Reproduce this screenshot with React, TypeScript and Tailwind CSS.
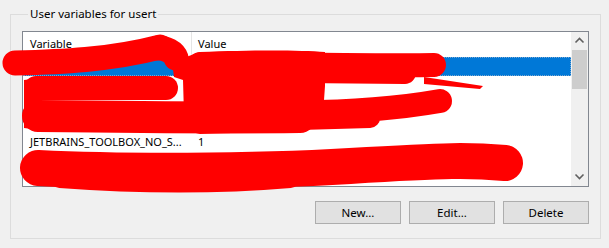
import React from "react";

const font = { fontFamily: '"Noto Sans", "Open Sans", sans-serif' };

function Chevron({ dir }: { dir: "up" | "down" }) {
  return (
    <svg width="17" height="17" viewBox="0 0 17 17">
      {dir === "up" ? (
        <polyline points="4.5,10.5 8.5,6.5 12.5,10.5" fill="none" stroke="#606060" strokeWidth="1.6" />
      ) : (
        <polyline points="4.5,5.5 8.5,9.5 12.5,5.5" fill="none" stroke="#606060" strokeWidth="1.6" />
      )}
    </svg>
  );
}

function Row({ name, value, selected }: { name?: string; value?: string; selected?: boolean }) {
  return (
    <div
      className={
        selected
          ? "flex h-[19px] items-center bg-[#0078d7] border border-dotted border-[#7aa7d0] text-white"
          : "flex h-[19px] items-center text-black"
      }
    >
      <div className="w-[169px] pl-[7px] whitespace-nowrap overflow-hidden">{name}</div>
      <div className="flex-1 pl-[6px] whitespace-nowrap">{value}</div>
    </div>
  );
}

export default function App() {
  return (
    <div className="relative w-[609px] h-[248px] bg-[#f0f0f0] pt-[6px] pl-[10px] overflow-hidden" style={font}>
      <fieldset className="w-[591px] border border-[#dcdcdc] px-[11px] pb-[14px] text-[11px] text-black">
        <legend className="ml-[6px] px-[2px] h-[16px] leading-[16px] text-[11.5px]">User variables for usert</legend>
        <div className="mt-[9px] w-[567px] h-[156px] border border-[#828790] bg-white flex">
          <div className="flex-1 flex flex-col">
            <div className="flex h-[25px] items-center">
              <div className="w-[169px] h-full pl-[7px] flex items-center border-r border-[#e5e5e5]">Variable</div>
              <div className="flex-1 pl-[6px]">Value</div>
            </div>
            <Row selected />
            <Row />
            <Row />
            <Row />
            <Row name="JETBRAINS_TOOLBOX_NO_S..." value="1" />
            <Row />
          </div>
          <div className="w-[17px] bg-[#f0f0f0] flex flex-col">
            <div className="h-[18px] flex items-start justify-center">
              <Chevron dir="up" />
            </div>
            <div className="h-[39px] mx-[1px] bg-[#cdcdcd]" />
            <div className="flex-1" />
            <div className="h-[17px] flex items-start justify-center">
              <Chevron dir="down" />
            </div>
          </div>
        </div>
        <div className="mt-[14px] flex justify-end gap-[8px]">
          <button className="w-[86px] h-[23px] border border-[#adadad] bg-[#e1e1e1] text-[11.5px]">New...</button>
          <button className="w-[86px] h-[23px] border border-[#adadad] bg-[#e1e1e1] text-[11.5px]">Edit...</button>
          <button className="w-[86px] h-[23px] border border-[#adadad] bg-[#e1e1e1] text-[11.5px]">Delete</button>
        </div>
      </fieldset>

      <svg
        className="absolute left-0 top-0 pointer-events-none"
        width="609"
        height="248"
        viewBox="0 0 609 248"
      >
        <g stroke="#ff0000" fill="none" strokeLinecap="round" strokeLinejoin="round">
          <path d="M15 63 C 60 62, 110 60, 160 47" strokeWidth="25" />
          <path d="M158 48 C 166 48, 174 52, 176 58" strokeWidth="25" />
          <path d="M200 64 C 300 64, 380 66, 434 65" strokeWidth="24" />
          <path d="M300 72 L 405 73" strokeWidth="22" />
          <path d="M36 88 L 166 88" strokeWidth="24" />
          <path d="M38 116 C 120 117, 220 118, 300 117" strokeWidth="32" />
          <path d="M300 112 C 360 112, 400 108, 440 101" strokeWidth="24" />
          <path d="M300 120 L 370 118" strokeWidth="20" />
          <path d="M38 168 C 120 172, 250 172, 350 166 S 470 160, 505 163" strokeWidth="36" />
          <path d="M60 178 C 140 184, 220 184, 290 178" strokeWidth="20" />
        </g>
        <path
          d="M172 62 L 200 52 C 250 50, 300 50, 325 52 L 325 86 L 322 128 C 290 131, 240 133, 200 134 C 188 132, 184 125, 184 115 L 183 80 L 174 77 Z"
          fill="#ff0000"
        />
        <path d="M24 80 L 40 78 L 40 130 L 24 128 Z" fill="#ff0000" />
        <polygon points="424,77 483,86 480,89 424,84" fill="#ff0000" />
      </svg>
    </div>
  );
}
